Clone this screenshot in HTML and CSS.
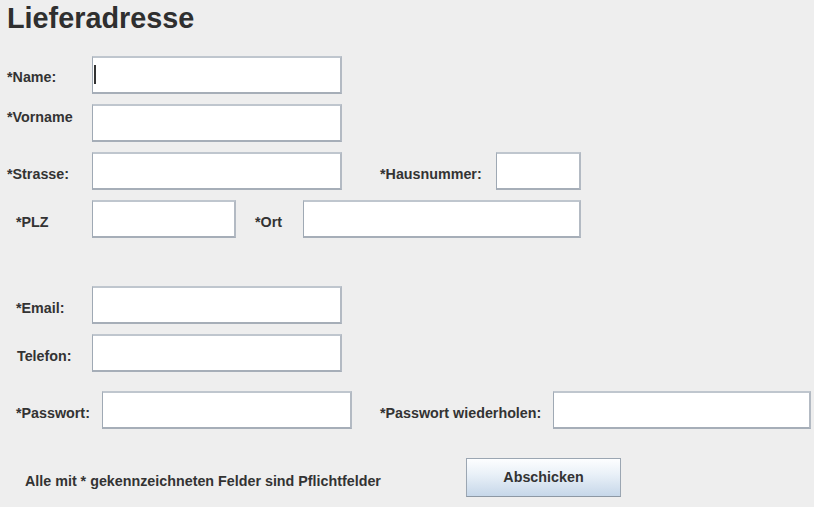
FILE: index.html
```html
<!doctype html>
<html>
<head>
    <meta name="viewport" content="width=device-width, initial-scale=1">
    <link rel="stylesheet" href="styles.css">
</head>
<body>

<h1>Lieferadresse</h1>

<form id='form'>
<div class='row first'>
    <label class='col-a name-label'>*Name:</label>
    <span class='focused'><input class='field wide' id='name'></span>
</div>
<div class='row'>
    <label class='col-a vorname-label'>*Vorname</label>
    <input class='field wide' id='vorname'>
</div>
<div class='row'>
    <label class='col-a'>*Strasse:</label>
    <input class='field wide' id='strasse'>
    <label class='haus-label'>*Hausnummer:</label>
    <input class='field haus' id='hausnummer'>
</div>
<div class='row'>
    <label class='col-b'>*PLZ</label>
    <input class='field plz' id='plz'>
    <label class='ort-label'>*Ort</label>
    <input class='field ort' id='ort'>
</div>
<div class='row contact'>
    <label class='col-b'>*Email:</label>
    <input class='field wide' id='email'>
</div>
<div class='row'>
    <label class='col-b telefon-label'>Telefon:</label>
    <input class='field wide' id='telefon'>
</div>
<div class='row password'>
    <label class='pw-label'>*Passwort:</label>
    <input class='field wide' id='passwort' type='password'>
    <label class='pw2-label'>*Passwort wiederholen:</label>
    <input class='field pw2' id='passwort2' type='password'>
</div>
<div class='row bottom'>
    <label class='hint'>Alle mit * gekennzeichneten Felder sind Pflichtfelder</label>
    <button type='button' id='submit'>Abschicken</button>
</div>
</form>

</body>
</html>
```

FILE: styles.css
```css
body {
    margin: 0;
    background-color: #eeeeee;
    font-family: "Liberation Sans", Arial, sans-serif;
    color: #333333;
}

h1 {
    margin: 0;
    padding-top: 2px;
    padding-left: 7px;
    font-size: 28.8px;
    line-height: 32px;
    font-weight: bold;
    color: #2f2f2f;
}

form {
    display: flex;
    flex-direction: column;
}

.row {
    display: flex;
    align-items: flex-start;
    height: 38px;
    margin-top: 10px;
}

.row.first {
    margin-top: 22px;
}

.row.contact {
    margin-top: 48px;
}

.row.password {
    margin-top: 19px;
}

.row.bottom {
    margin-top: 29px;
    height: 39px;
}

label {
    font-size: 14.3px;
    font-weight: bold;
    line-height: 16px;
    padding-top: 14px;
    white-space: nowrap;
}

.col-a {
    margin-left: 7px;
    width: 85px;
}

.col-b {
    margin-left: 16px;
    width: 76px;
}

.name-label {
    padding-top: 13px;
}

.vorname-label {
    padding-top: 5px;
}

.telefon-label {
    margin-left: 17px;
    width: 75px;
}

.haus-label {
    margin-left: 38px;
    width: 116px;
}

.ort-label {
    margin-left: 19px;
    width: 48px;
}

.pw-label {
    margin-left: 16px;
    width: 86px;
}

.pw2-label {
    margin-left: 28px;
    width: 173px;
}

.hint {
    margin-left: 25px;
    width: 441px;
    padding-top: 15px;
}

.field {
    box-sizing: border-box;
    height: 38px;
    margin: 0;
    padding: 0 4px;
    background-color: #ffffff;
    border-style: solid;
    border-width: 2px 2px 2px 1px;
    border-top-color: #bfc6ce;
    border-left-color: #9fa9b4;
    border-right-color: #b3bac3;
    border-bottom-color: #a6aeb8;
    font-family: "Liberation Sans", Arial, sans-serif;
    font-size: 14px;
    caret-color: transparent;
    outline: none;
}

.wide {
    width: 250px;
}

.haus {
    width: 85px;
}

.plz {
    width: 144px;
}

.ort {
    width: 278px;
}

.pw2 {
    width: 258px;
}

.focused {
    position: relative;
    display: block;
    height: 38px;
}

.focused::after {
    content: '';
    position: absolute;
    left: 2px;
    top: 9px;
    width: 2px;
    height: 19px;
    background-color: #333333;
}

#submit {
    box-sizing: border-box;
    width: 155px;
    height: 39px;
    margin: 0;
    padding: 0 0 1px 0;
    border: 1px solid #9ba6b2;
    border-bottom-color: #8d98a4;
    background: linear-gradient(to bottom, #fdfeff 0%, #eaf1f8 40%, #c6d7e9 100%);
    font-family: "Liberation Sans", Arial, sans-serif;
    font-size: 14.3px;
    font-weight: bold;
    color: #333333;
}
```
